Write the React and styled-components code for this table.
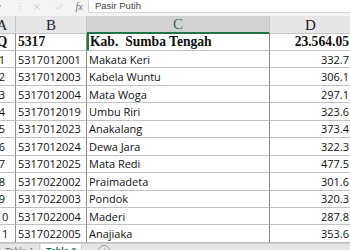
import React from "react";
import styled, { createGlobalStyle } from "styled-components";
import { X, Check } from "lucide-react";

const GlobalStyle = createGlobalStyle`
  body {
    margin: 0;
    background: #ffffff;
    overflow: hidden;
  }
`;

const rows = [
  ["1", "5317012001", "Makata Keri", "332.7"],
  ["2", "5317012003", "Kabela Wuntu", "306.1"],
  ["3", "5317012004", "Mata Woga", "297.1"],
  ["4", "5317012019", "Umbu Riri", "323.6"],
  ["5", "5317012023", "Anakalang", "373.4"],
  ["6", "5317012024", "Dewa Jara", "322.3"],
  ["7", "5317012025", "Mata Redi", "477.5"],
  ["8", "5317022002", "Praimadeta", "301.6"],
  ["9", "5317022003", "Pondok", "320.3"],
  ["10", "5317022004", "Maderi", "287.8"],
  ["11", "5317022005", "Anajiaka", "353.6"],
];

const Screen = styled.div`
  width: 350px;
  height: 250px;
  overflow: hidden;
  background: #f3f3f3;
  display: flex;
  flex-direction: column;
`;

const FormulaBar = styled.div`
  height: 13px;
  display: grid;
  grid-template-columns: 88px 1fr;
  flex-shrink: 0;
  font-family: "Liberation Sans", sans-serif;
`;

const BarTools = styled.div`
  display: grid;
  grid-template-columns: 12px 14px 22px 22px 18px;
  align-items: center;
  justify-items: center;
  color: #b4b4b4;
  font-size: 10px;
`;

const Arrow = styled.span`
  justify-self: start;
  font-size: 8px;
  color: #9a9a9a;
  margin-left: -3px;
`;

const Dots = styled.span`
  font-size: 9px;
  color: #c4c4c4;
`;

const ToolIcon = styled.span`
  display: flex;
`;

const Fx = styled.span`
  font-family: "Liberation Serif", serif;
  font-style: italic;
  font-size: 10px;
  color: #707070;
`;

const FormulaInput = styled.div`
  background: #ffffff;
  border-left: 1px solid #d6d6d6;
  border-bottom: 1px solid #d6d6d6;
  padding-left: 6px;
  font-size: 9.5px;
  line-height: 12px;
  color: #444;
`;

const Sheet = styled.div`
  margin-top: 3px;
  margin-left: -11px;
  display: grid;
  grid-template-columns: 27px 71px 183px 82px;
  grid-template-rows: 18px 17px repeat(11, 17.45px);
  background: #ffffff;
  flex-shrink: 0;
`;

const HeadCell = styled.div`
  background: ${(p) => (p.$active ? "#d2d2d2" : "#e6e6e6")};
  color: ${(p) => (p.$active ? "#217346" : "#222")};
  border-right: 1px solid #c6c6c6;
  border-bottom: ${(p) => (p.$active ? "2px solid #217346" : "1px solid #c6c6c6")};
  box-sizing: border-box;
  display: flex;
  align-items: center;
  justify-content: center;
  font-family: "Liberation Serif", serif;
  font-size: 15px;
  padding-top: 1px;
`;

const Cell = styled.div`
  box-sizing: border-box;
  border-right: 1px solid #8e8e8e;
  border-bottom: 1px solid #c2c2c2;
  border-left: ${(p) => (p.$mark ? "2px solid #217346" : "none")};
  display: flex;
  align-items: center;
  justify-content: ${(p) =>
    p.$align === "right" ? "flex-end" : p.$align === "center" ? "center" : "flex-start"};
  padding: 0 ${(p) => (p.$align === "right" ? "2px" : "0")} 0
    ${(p) => (p.$mark ? "1px" : p.$align === "left" ? "2px" : "0")};
  white-space: nowrap;
  overflow: visible;
  color: #111;
  font-family: ${(p) => (p.$bold ? '"Liberation Serif", serif' : '"Open Sans", sans-serif')};
  font-weight: ${(p) => (p.$bold ? 700 : 400)};
  font-size: ${(p) => (p.$bold ? "13.6px" : "11px")};
`;

const TabBar = styled.div`
  flex: 1;
  display: flex;
  align-items: flex-start;
  background: #e6e6e6;
  border-top: 1px solid #cfcfcf;
  font-family: "Liberation Sans", sans-serif;
  font-size: 9px;
`;

const Tab = styled.div`
  padding: 2px 5px 6px;
  margin-right: ${(p) => (p.$active ? "10px" : "1px")};
  background: ${(p) => (p.$active ? "#ffffff" : "transparent")};
  color: ${(p) => (p.$active ? "#217346" : "#777")};
  font-weight: ${(p) => (p.$active ? 700 : 400)};
  border-right: 1px solid #cfcfcf;
`;

const AddTab = styled.div`
  margin-left: 6px;
  margin-top: 1px;
  width: 10px;
  height: 10px;
  border: 1px solid #999;
  border-radius: 50%;
  color: #888;
  font-size: 9px;
  line-height: 10px;
  text-align: center;
`;

export default function App() {
  return (
    <Screen>
      <GlobalStyle />
      <FormulaBar>
        <BarTools>
          <Arrow>▾</Arrow>
          <Dots>⋮</Dots>
          <ToolIcon>
            <X size={10} strokeWidth={1.4} color="#b4b4b4" />
          </ToolIcon>
          <ToolIcon>
            <Check size={10} strokeWidth={1.4} color="#b4b4b4" />
          </ToolIcon>
          <Fx>fx</Fx>
        </BarTools>
        <FormulaInput>Pasir Putih</FormulaInput>
      </FormulaBar>
      <Sheet>
        <HeadCell>A</HeadCell>
        <HeadCell>B</HeadCell>
        <HeadCell $active>C</HeadCell>
        <HeadCell>D</HeadCell>

        <Cell $bold $align="center">Q</Cell>
        <Cell $bold $align="left">5317</Cell>
        <Cell $bold $align="left" $mark>Kab.&nbsp; Sumba Tengah</Cell>
        <Cell $bold $align="right">23.564.05</Cell>

        {rows.map((r) => (
          <React.Fragment key={r[1]}>
            <Cell $align="center">{r[0]}</Cell>
            <Cell $align="left">{r[1]}</Cell>
            <Cell $align="left">{r[2]}</Cell>
            <Cell $align="right">{r[3]}</Cell>
          </React.Fragment>
        ))}
      </Sheet>
      <TabBar>
        <Tab>Table 1</Tab>
        <Tab $active>Table 2</Tab>
        <AddTab>+</AddTab>
      </TabBar>
    </Screen>
  );
}
